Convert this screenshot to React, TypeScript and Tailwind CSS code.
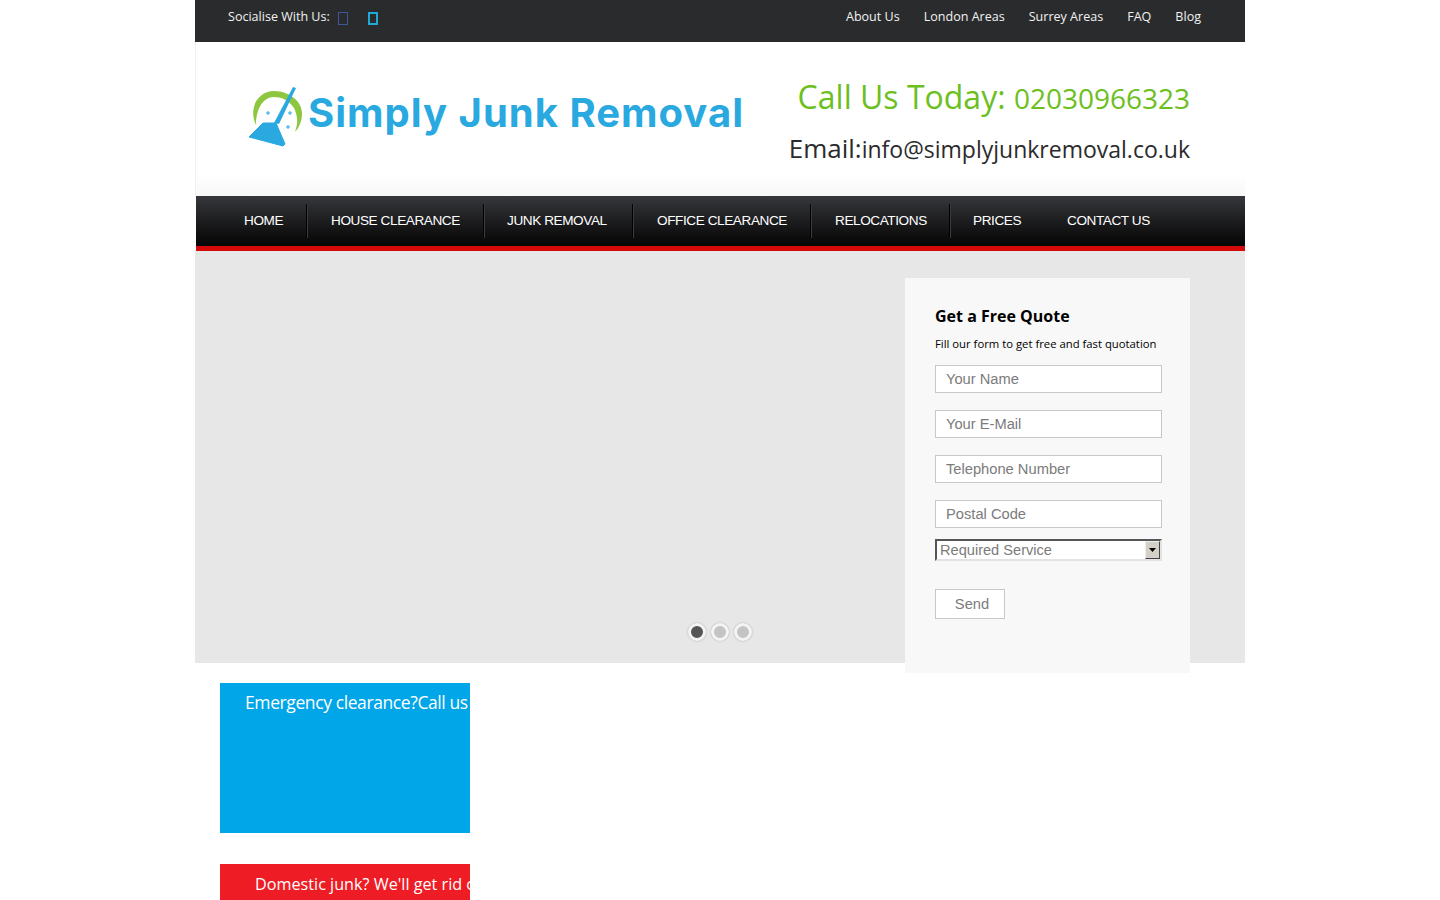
export default function App() {
  const top = ["About Us", "London Areas", "Surrey Areas", "FAQ", "Blog"];
  const nav: [string, string, boolean][] = [
    ["HOME", "w-[111px] pl-[47px]", true],
    ["HOUSE CLEARANCE", "w-[177px] pl-[23px]", true],
    ["JUNK REMOVAL", "w-[149px] pl-[22px]", true],
    ["OFFICE CLEARANCE", "w-[178px] pl-[23px]", true],
    ["RELOCATIONS", "w-[139px] pl-[23px]", true],
    ["PRICES", "w-[95px] pl-[22px]", false],
    ["CONTACT US", "w-[128px] pl-[21px]", false],
  ];
  const fields = ["Your Name", "Your E-Mail", "Telephone Number", "Postal Code"];
  const ui = "font-['Open_Sans','Noto_Sans',sans-serif]";
  const arial = "font-['Liberation_Sans',Arial,sans-serif]";
  return (
    <div className="h-screen overflow-hidden bg-white">
      <div className="mx-auto w-[1050px]">
        <div className={`flex h-[42px] items-start justify-between bg-[#2a2b2d] pl-[33px] pr-[44px] pt-[8px] text-[12.55px] leading-[18px] text-[#f2f2f2] ${ui}`}>
          <div className="flex items-start">
            <span>Socialise With Us:</span>
            <span className="ml-[8px] mt-[4px] block h-[13px] w-[10px] border border-[#3b5998]" />
            <span className="ml-[20px] mt-[4px] block h-[13px] w-[10px] border-2 border-[#1fa9d6]" />
          </div>
          <div className="flex gap-[24px]">
            {top.map((t) => (
              <span key={t}>{t}</span>
            ))}
          </div>
        </div>

        <div className="flex h-[154px] border-l border-[#f0f0f0] bg-gradient-to-b from-white from-[85%] to-[#f8f8f8]">
          <div className="flex h-full w-[560px] items-start pl-[52px] pt-[42px]">
            <svg width="56" height="64" viewBox="0 0 56 64" className="shrink-0">
              <path d="M8 41C0 24 10 7 26 7c16 0 28 11 28 22 0 8-3 15-7 19 3-8 3-16-1-24-5-8-13-11-20-11C15 13 8 25 8 41Z" fill="#8dc63f" />
              <path d="M45 3 48 4 31 40 26 39Z" fill="#29a9e0" />
              <path d="M15 39 28 39 37 60 35 62 1 53Z" fill="#29a9e0" stroke="#29a9e0" strokeLinejoin="round" />
              <path d="M18 29h4M20 27v4M40 29h4M42 27v4M38 43h4M40 41v4" stroke="#29a9e0" strokeWidth="1" />
            </svg>
            <span className="ml-[4px] mt-[3px] whitespace-nowrap font-['Inter',sans-serif] text-[40px] font-bold leading-[52px] tracking-[1px] text-[#29a9e0]">
              Simply Junk Removal
            </span>
          </div>
          <div className={`flex flex-1 flex-col items-end pr-[55px] pt-[33px] ${ui}`}>
            <div className="whitespace-nowrap leading-[44px] text-[#6cc01e]">
              <span className="text-[32px]">Call Us Today: </span>
              <span className="text-[28px]">02030966323</span>
            </div>
            <div className="mt-[2px] whitespace-nowrap leading-[42px] text-[#2b2b2b]">
              <span className="text-[26px]">Email:</span>
              <span className="text-[23px]">info@simplyjunkremoval.co.uk</span>
            </div>
          </div>
        </div>

        <div className={`ml-[1px] flex h-[55px] border-b-[5px] border-[#d40a0a] bg-gradient-to-b from-[#37383c] to-[#060606] pl-[1px] text-[13.6px] tracking-[-0.42px] text-white ${arial}`}>
          {nav.map(([label, w, sep]) => (
            <div key={label} className={`relative flex h-full items-center ${w}`}>
              {label}
              {sep && <span className="absolute right-[1px] top-[8px] h-[34px] w-px bg-black shadow-[1px_0_0_#3a3b3e]" />}
            </div>
          ))}
        </div>

        <div className="relative flex h-[412px] items-end justify-center gap-[7px] bg-[#e7e7e7] pb-[22px]">
          {[0, 1, 2].map((i) => (
            <span key={i} className="flex h-[18px] w-[16px] items-center justify-center">
              <span className={`block h-[18px] w-[18px] shrink-0 rounded-full border-[3px] border-[#f4f4f4] shadow-[0_0_2px_#aaa] ${i === 0 ? "bg-[#555555]" : "bg-[#c4c4c4]"}`} />
            </span>
          ))}

          <div className="absolute left-[710px] top-[27px] h-[395px] w-[285px] bg-[#f8f8f8] pl-[30px] pt-[26px]">
            <h2 className={`text-[16px] font-bold leading-[24px] text-black ${ui}`}>Get a Free Quote</h2>
            <p className={`mt-[6px] text-[11.3px] leading-[20px] text-black ${ui}`}>Fill our form to get free and fast quotation</p>
            <div className={`mt-[11px] flex flex-col gap-[17px] ${arial}`}>
              {fields.map((f) => (
                <div key={f} className="flex h-[28px] w-[227px] items-center border border-[#c8c8c8] bg-white pl-[10px] text-[14.7px] text-[#7b7b7b]">
                  {f}
                </div>
              ))}
            </div>
            <div className={`mt-[11px] flex h-[22px] w-[227px] items-center justify-between border-2 border-b-[#e3e3e3] border-l-[#555] border-r-[#e3e3e3] border-t-[#555] bg-white pl-[3px] pt-[1px] text-[14.6px] text-[#7b7b7b] ${arial}`}>
              <span>Required Service</span>
              <span className="-mt-[1px] flex h-[18px] w-[15px] items-center justify-center border border-b-[#444] border-l-[#eee] border-r-[#444] border-t-[#eee] bg-[#d4d0c8]">
                <svg width="7" height="4" viewBox="0 0 7 4"><path d="M0 0h7L3.5 4Z" fill="#000" /></svg>
              </span>
            </div>
            <div className={`mt-[28px] flex h-[30px] w-[70px] items-center justify-center border border-[#c8c8c8] bg-white pl-[4px] text-[14.7px] text-[#7b7b7b] ${arial}`}>
              Send
            </div>
          </div>
        </div>

        <div className={`flex flex-col gap-[31px] pl-[25px] pt-[20px] text-white ${ui}`}>
          <div className="h-[150px] w-[250px] overflow-hidden whitespace-nowrap bg-[#00a6e8] pl-[25px] pt-[5px] text-[17.5px] leading-[28px] tracking-[-0.4px]">
            Emergency clearance?Call us today
          </div>
          <div className="h-[150px] w-[250px] overflow-hidden whitespace-nowrap bg-[#ee1c25] pl-[35px] pt-[6px] text-[16.2px] leading-[28px]">
            Domestic junk? We'll get rid of it
          </div>
        </div>
      </div>
    </div>
  );
}
